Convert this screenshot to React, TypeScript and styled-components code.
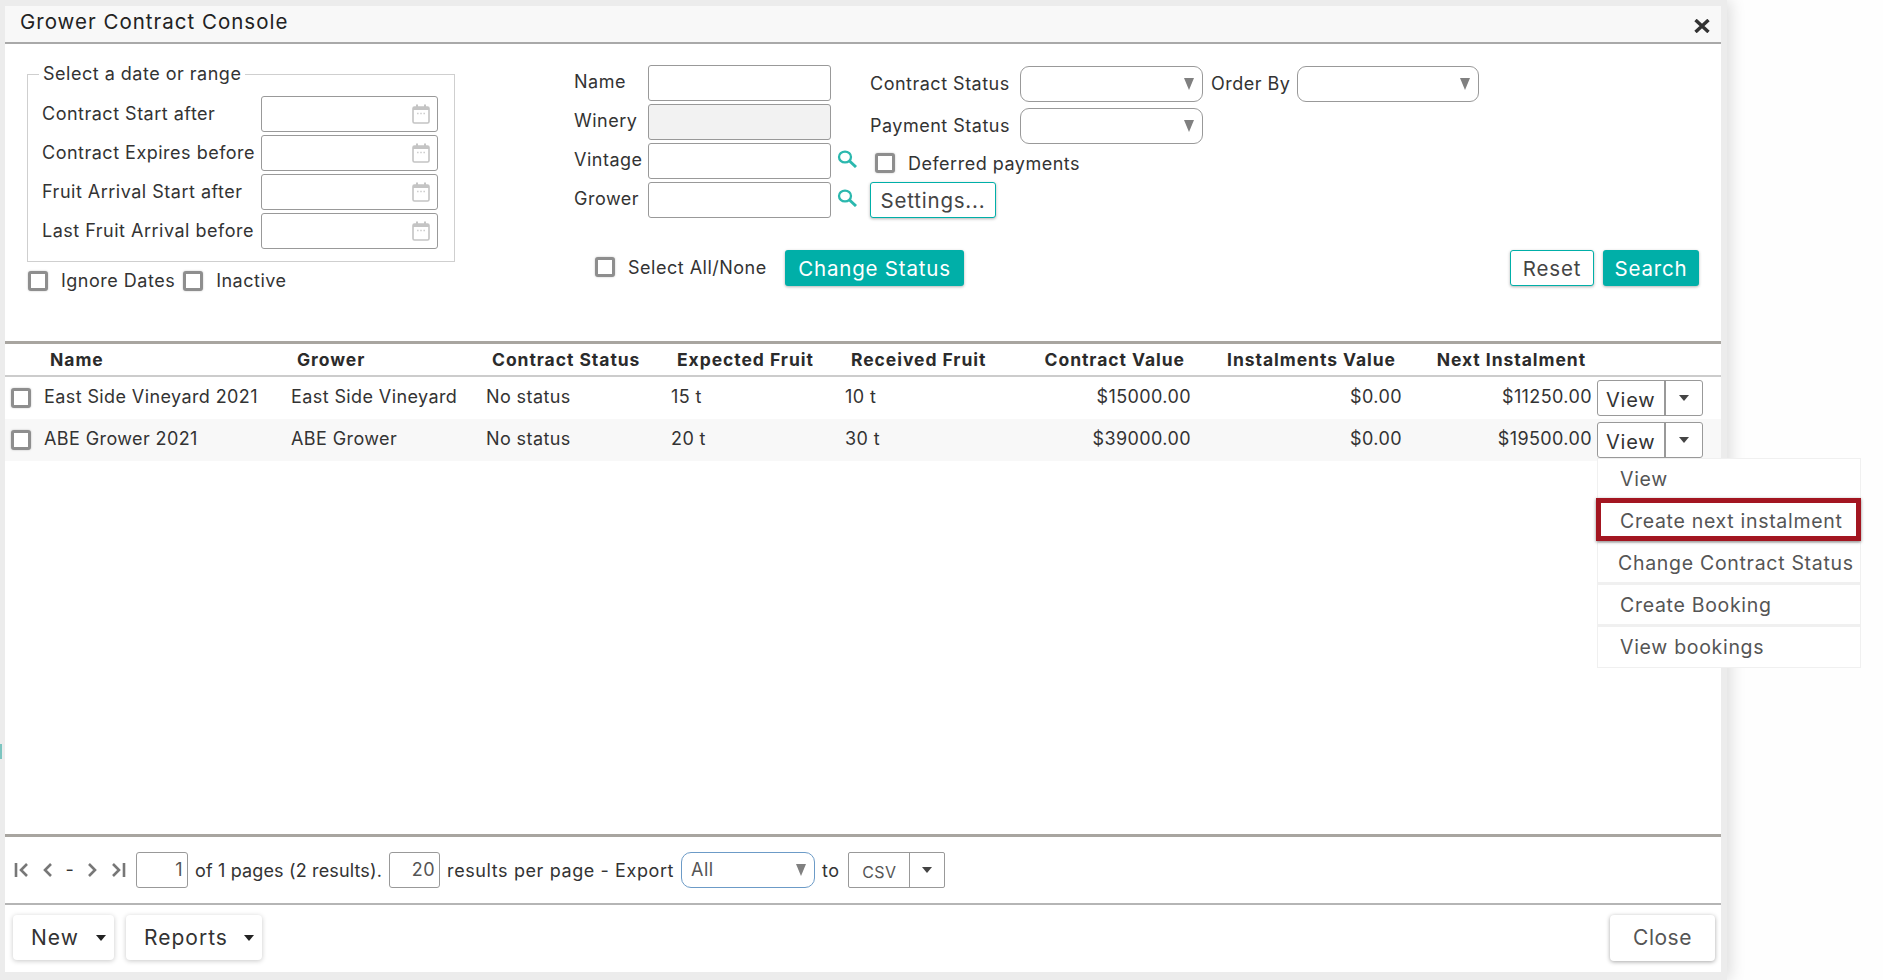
import styled, { createGlobalStyle } from 'styled-components'

const dateFields = ['Contract Start after', 'Contract Expires before', 'Fruit Arrival Start after', 'Last Fruit Arrival before']

const contracts = [
  { name: 'East Side Vineyard 2021', grower: 'East Side Vineyard', expected: '15 t', received: '10 t', value: '$15000.00', next: '$11250.00' },
  { name: 'ABE Grower 2021', grower: 'ABE Grower', expected: '20 t', received: '30 t', value: '$39000.00', next: '$19500.00' },
]

const menuItems = ['View', 'Create next instalment', 'Change Contract Status', 'Create Booking', 'View bookings']

const CalendarIcon = () => (
  <svg width="18" height="20" viewBox="0 0 18 20">
    <rect x="4" y="0.5" width="2" height="4" fill="#c4c4c4" />
    <rect x="12" y="0.5" width="2" height="4" fill="#c4c4c4" />
    <path d="M1 3h16v3H1z" fill="#c4c4c4" />
    <rect x="1" y="3" width="16" height="16" rx="1.5" fill="none" stroke="#c4c4c4" strokeWidth="1.6" />
    <path d="M5 9.5h1.6M8.2 9.5h1.6M11.4 9.5H13" stroke="#cfcfcf" strokeWidth="1.4" />
  </svg>
)

const SearchIcon = () => (
  <svg width="20" height="18" viewBox="0 0 20 18" fill="none" stroke="#2bb8ae">
    <ellipse cx="8" cy="7" rx="6" ry="5.4" strokeWidth="2.3" />
    <path d="M12.5 11l6.5 6" strokeWidth="3" />
  </svg>
)

const CloseIcon = () => (
  <svg width="16" height="14" viewBox="0 0 16 14" stroke="#333" strokeWidth="3.4">
    <path d="M1.5 1l13 12M14.5 1l-13 12" />
  </svg>
)

const PagerIcon = ({ d, width }: { d: string; width: number }) => (
  <svg width={width} height="16" viewBox={`0 0 ${width} 16`} fill="none" stroke="#777" strokeWidth="2.6">
    <path d={d} />
  </svg>
)

function App() {
  return (
    <>
      <GlobalStyle />
      <Page>
        <EdgeMark />
        <Dialog>
          <TitleBar>
            <Title>Grower Contract Console</Title>
            <CloseButton>
              <CloseIcon />
            </CloseButton>
          </TitleBar>

          <Filters>
            <DateColumn>
              <DateBox>
                <DateLegend>Select a date or range</DateLegend>
                <DateRows>
                  {dateFields.map((label) => (
                    <DateRow key={label}>
                      <DateLabel>{label}</DateLabel>
                      <DateInput>
                        <CalendarIcon />
                      </DateInput>
                    </DateRow>
                  ))}
                </DateRows>
              </DateBox>
              <CheckRow>
                <Checkbox />
                <CheckLabel>Ignore Dates</CheckLabel>
                <Checkbox />
                <CheckLabel>Inactive</CheckLabel>
              </CheckRow>
            </DateColumn>

            <MainColumn>
              <TopRows>
                <NameGroup>
                  <NameRow>
                    <NameLabel>Name</NameLabel>
                    <TextInput readOnly />
                  </NameRow>
                  <NameRow>
                    <NameLabel>Winery</NameLabel>
                    <TextInput readOnly disabled />
                  </NameRow>
                  <NameRow>
                    <NameLabel>Vintage</NameLabel>
                    <TextInput readOnly />
                    <SearchButton>
                      <SearchIcon />
                    </SearchButton>
                  </NameRow>
                  <NameRow>
                    <NameLabel>Grower</NameLabel>
                    <TextInput readOnly />
                    <SearchButton>
                      <SearchIcon />
                    </SearchButton>
                  </NameRow>
                </NameGroup>

                <StatusGroup>
                  <StatusRow>
                    <StatusLabel>Contract Status</StatusLabel>
                    <SelectBox $width={183}>
                      <SelectArrow />
                    </SelectBox>
                    <OrderLabel>Order By</OrderLabel>
                    <SelectBox $width={182}>
                      <SelectArrow />
                    </SelectBox>
                  </StatusRow>
                  <StatusRow>
                    <StatusLabel>Payment Status</StatusLabel>
                    <SelectBox $width={183}>
                      <SelectArrow />
                    </SelectBox>
                  </StatusRow>
                  <DeferredRow>
                    <Checkbox />
                    <CheckLabel>Deferred payments</CheckLabel>
                  </DeferredRow>
                  <OutlineButton $width={126}>Settings...</OutlineButton>
                </StatusGroup>
              </TopRows>

              <ActionRow>
                <SelectAll>
                  <Checkbox />
                  <CheckLabel>Select All/None</CheckLabel>
                </SelectAll>
                <PrimaryButton $width={179}>Change Status</PrimaryButton>
                <ActionSpacer />
                <SearchActions>
                  <OutlineButton $width={84}>Reset</OutlineButton>
                  <PrimaryButton $width={96}>Search</PrimaryButton>
                </SearchActions>
              </ActionRow>
            </MainColumn>
          </Filters>

          <Results>
            <HeaderRow>
              <span />
              <HeadCell>Name</HeadCell>
              <HeadCell>Grower</HeadCell>
              <HeadCell>Contract Status</HeadCell>
              <HeadCell>Expected Fruit</HeadCell>
              <HeadCell>Received Fruit</HeadCell>
              <HeadCell $right>Contract Value</HeadCell>
              <HeadCell $right>Instalments Value</HeadCell>
              <HeadCell $right>Next Instalment</HeadCell>
            </HeaderRow>

            {contracts.map((row, index) => (
              <DataRow key={row.name} $striped={index === 1}>
                <CheckCell>
                  <Checkbox />
                </CheckCell>
                <Cell>{row.name}</Cell>
                <Cell>{row.grower}</Cell>
                <Cell>No status</Cell>
                <Cell>{row.expected}</Cell>
                <Cell>{row.received}</Cell>
                <Cell $right>{row.value}</Cell>
                <Cell $right>$0.00</Cell>
                <Cell $right>{row.next}</Cell>
                <RowAction>
                  <SplitButton>
                    <SplitLabel>View</SplitLabel>
                    <SplitCaret>
                      <Caret />
                    </SplitCaret>
                  </SplitButton>
                  {index === 1 && (
                    <Menu>
                      {menuItems.map((item, i) => (
                        <MenuItem key={item} $shift={item === 'Change Contract Status'}>
                          {item}
                          {i === 1 && <Highlight />}
                        </MenuItem>
                      ))}
                    </Menu>
                  )}
                </RowAction>
              </DataRow>
            ))}
          </Results>

          <Pager>
            <PagerIcons>
              <PagerIcon width={15} d="M2 1v14M13 2L7 8l6 6" />
              <PagerIcon width={11} d="M9 2L3 8l6 6" />
              <Dash>-</Dash>
              <PagerIcon width={11} d="M2 2l6 6-6 6" />
              <PagerIcon width={15} d="M2 2l6 6-6 6M13 1v14" />
            </PagerIcons>
            <PageInput $width={52}>1</PageInput>
            <PagerText $spacing={0.15}>of 1 pages (2 results).</PagerText>
            <PageInput $width={51}>20</PageInput>
            <PagerText $spacing={0.6}>results per page - Export</PagerText>
            <ExportSelect>
              All
              <SelectArrow />
            </ExportSelect>
            <PagerText $spacing={0.4}>to</PagerText>
            <FormatCombo>
              <FormatValue>CSV</FormatValue>
              <FormatCaret>
                <Caret />
              </FormatCaret>
            </FormatCombo>
          </Pager>

          <Footer>
            <FooterButton $width={101}>
              New
              <FooterCaret />
            </FooterButton>
            <FooterButton $width={136}>
              Reports
              <FooterCaret />
            </FooterButton>
            <ActionSpacer />
            <CloseAction>Close</CloseAction>
          </Footer>
        </Dialog>
      </Page>
    </>
  )
}

export default App

const GlobalStyle = createGlobalStyle`
  html, body {
    margin: 0;
    height: 100%;
    background: #fefefe;
    overflow: hidden;
  }

  body {
    font-family: Inter, "Open Sans", sans-serif;
    font-size: 18px;
    letter-spacing: 0.5px;
    color: #333;
  }

  * {
    box-sizing: border-box;
  }
`

const Page = styled.div`
  position: relative;
  height: 980px;
  width: 1883px;
`

const EdgeMark = styled.span`
  position: absolute;
  z-index: 1;
  left: 0;
  top: 744px;
  width: 2px;
  height: 15px;
  background: #7cc5c0;
`

const Dialog = styled.div`
  width: 1727px;
  height: 980px;
  padding: 6px 6px 8px 5px;
  background: #ececec;
  box-shadow: 4px 0 14px rgba(0, 0, 0, 0.13);
  display: flex;
  flex-direction: column;

  & > * {
    background: #fff;
  }
`

const TitleBar = styled.div`
  height: 38px;
  flex: none;
  background: #f8f8f8;
  border-bottom: 2px solid #a9a9a9;
  display: flex;
  align-items: center;
  justify-content: space-between;
  padding: 0 11px 0 15px;
`

const Title = styled.h1`
  margin: 0 0 5px;
  font-size: 20.5px;
  font-weight: 400;
  letter-spacing: 1px;
  color: #222;
`

const CloseButton = styled.div`
  display: flex;
  margin-top: 3px;
`

const Filters = styled.div`
  height: 297px;
  flex: none;
  display: flex;
`

const DateColumn = styled.div`
  width: 428px;
  margin-left: 22px;
  padding-top: 19px;
  flex: none;
`

const DateBox = styled.fieldset`
  margin: 0;
  padding: 11px 16px 12px 14px;
  width: 428px;
  border: 1px solid #cfcfcf;
`

const DateLegend = styled.legend`
  margin-left: -3px;
  padding: 0 4px;
  line-height: 22px;
`

const DateRows = styled.div`
  display: flex;
  flex-direction: column;
  gap: 3px;
`

const DateRow = styled.div`
  display: flex;
  align-items: center;
  height: 36px;
`

const DateLabel = styled.label`
  width: 219px;
  flex: none;
  white-space: nowrap;
  margin-top: -2px;
`

const DateInput = styled.div`
  width: 177px;
  height: 36px;
  border: 1px solid #999;
  border-radius: 3px;
  display: flex;
  align-items: center;
  justify-content: flex-end;
  padding-right: 7px;
`

const CheckRow = styled.div`
  display: flex;
  align-items: center;
  margin: 8px 0 0 1px;
`

const Checkbox = styled.span`
  width: 20px;
  height: 20px;
  flex: none;
  display: inline-block;
  background: #fff;
  border: 3px solid #8e8e8e;
  border-radius: 3px;
  box-shadow: 0 0 2px rgba(0, 0, 0, 0.25);
`

const CheckLabel = styled.label`
  margin: 0 8px 0 13px;
  white-space: nowrap;
`

const MainColumn = styled.div`
  width: 1125px;
  margin-left: 119px;
  padding-top: 21px;
  flex: none;
`

const TopRows = styled.div`
  display: flex;
`

const NameGroup = styled.div`
  width: 296px;
  flex: none;
  display: flex;
  flex-direction: column;
  gap: 3px;
`

const NameRow = styled.div`
  display: flex;
  align-items: center;
  height: 36px;
`

const NameLabel = styled.label`
  width: 74px;
  flex: none;
  margin-top: -4px;
`

const TextInput = styled.input`
  width: 183px;
  height: 36px;
  flex: none;
  padding: 0 6px;
  border: 1px solid #999;
  border-radius: 3px;
  background: #fff;

  &:disabled {
    background: #f2f2f2;
  }
`

const SearchButton = styled.div`
  display: flex;
  margin: -5px 0 0 6px;
`

const StatusGroup = styled.div`
  padding-top: 1px;
  display: flex;
  flex-direction: column;
  align-items: flex-start;
`

const StatusRow = styled.div`
  display: flex;
  align-items: center;
  height: 36px;
  margin-bottom: 6px;
`

const StatusLabel = styled.label`
  width: 150px;
  flex: none;
  margin-top: -1px;
  white-space: nowrap;
`

const OrderLabel = styled.label`
  width: 94px;
  flex: none;
  padding-left: 8px;
  margin-top: -1px;
  white-space: nowrap;
`

const SelectBox = styled.div<{ $width: number }>`
  width: ${(p) => p.$width}px;
  height: 36px;
  position: relative;
  border: 1px solid #999;
  border-radius: 9px;
  background: #fff;
`

const SelectArrow = styled.span`
  position: absolute;
  right: 8px;
  top: 11px;
  width: 0;
  height: 0;
  border-left: 5.5px solid transparent;
  border-right: 5.5px solid transparent;
  border-top: 12px solid #808080;
`

const DeferredRow = styled.div`
  display: flex;
  align-items: center;
  height: 20px;
  margin: 3px 0 9px 5px;
`

const BaseButton = styled.button<{ $width: number }>`
  width: ${(p) => p.$width}px;
  height: 36px;
  padding: 0;
  border-radius: 3px;
  font: inherit;
  font-size: 20.5px;
  letter-spacing: 0.8px;
  box-shadow: 0 1px 3px rgba(0, 0, 0, 0.3);
`

const OutlineButton = styled(BaseButton)`
  background: #fff;
  border: 1px solid #00afa8;
  color: #444;
`

const PrimaryButton = styled(BaseButton)`
  background: #00afa8;
  border: none;
  color: #fff;
`

const ActionRow = styled.div`
  display: flex;
  align-items: center;
  height: 36px;
  margin-top: 32px;
`

const SearchActions = styled.div`
  display: flex;
  gap: 9px;
`

const SelectAll = styled.div`
  width: 211px;
  flex: none;
  display: flex;
  align-items: center;
  padding-left: 21px;
  margin-top: -2px;
`

const ActionSpacer = styled.div`
  flex: 1;
  align-self: stretch;
`

const Results = styled.div`
  flex: 1;
  border-top: 3px solid #a8a5a0;
`

const rowColumns = '39px 247px 195px 185px 174px 195px 151px 211px 190px 112px'

const HeaderRow = styled.div`
  display: grid;
  grid-template-columns: ${rowColumns};
  align-items: center;
  height: 33px;
  border-bottom: 2px solid #cccccc;
`

const HeadCell = styled.div<{ $right?: boolean }>`
  font-size: 17.5px;
  font-weight: 700;
  letter-spacing: 0.95px;
  white-space: nowrap;
  color: #2b2b2b;
  padding: ${(p) => (p.$right ? '0 6px 0 0' : '0 0 0 6px')};
  text-align: ${(p) => (p.$right ? 'right' : 'left')};
`

const DataRow = styled.div<{ $striped?: boolean }>`
  display: grid;
  grid-template-columns: ${rowColumns};
  align-items: center;
  height: 42px;
  background: ${(p) => (p.$striped ? '#f8f8f8' : '#fff')};
`

const Cell = styled.div<{ $right?: boolean }>`
  white-space: nowrap;
  margin-top: -4px;
  letter-spacing: 0.4px;
  text-align: ${(p) => (p.$right ? 'right' : 'left')};
`

const CheckCell = styled.div`
  display: flex;
  padding-left: 6px;
`

const RowAction = styled.div`
  position: relative;
  margin-left: 5px;
  width: 106px;
`

const SplitButton = styled.div`
  display: flex;
  height: 36px;
  background: #fff;
  border: 1px solid #999;
  border-radius: 3px;
`

const SplitLabel = styled.span`
  width: 68px;
  font-size: 20px;
  letter-spacing: 0.8px;
  line-height: 38px;
  padding-left: 8px;
  border-right: 2px solid #999;
`

const SplitCaret = styled.span`
  flex: 1;
  display: flex;
  align-items: center;
  justify-content: center;
`

const Caret = styled.span`
  width: 0;
  height: 0;
  border-left: 5.5px solid transparent;
  border-right: 5.5px solid transparent;
  border-top: 6px solid #444;
`

const Menu = styled.div`
  position: absolute;
  z-index: 2;
  left: 0;
  top: 36px;
  width: 264px;
  background: #fff;
  border: 1px solid #f0f0f0;
`

const MenuItem = styled.div<{ $shift?: boolean }>`
  position: relative;
  height: 42px;
  line-height: 40px;
  padding-left: ${(p) => (p.$shift ? '20px' : '22px')};
  font-size: 19.5px;
  letter-spacing: 0.7px;
  white-space: nowrap;
  color: #555;
  border-bottom: 3px solid #f0f0f0;

  &:last-child {
    height: 40px;
    border-bottom: none;
  }
`

const Highlight = styled.span`
  position: absolute;
  left: -2px;
  right: -1px;
  top: -3px;
  height: 43px;
  border: 5px solid #a31621;
  box-shadow: 0 1px 3px rgba(0, 0, 0, 0.45);
`

const Pager = styled.div`
  height: 71px;
  flex: none;
  display: flex;
  align-items: center;
  padding-left: 9px;
  border-top: 3px solid #a8a5a0;
  border-bottom: 2px solid #b5b5b5;
`

const PagerIcons = styled.div`
  width: 122px;
  flex: none;
  display: flex;
  align-items: center;
  justify-content: space-between;
  padding-right: 10px;
`

const Dash = styled.span`
  line-height: 16px;
`

const PageInput = styled.div<{ $width: number }>`
  width: ${(p) => p.$width}px;
  height: 36px;
  flex: none;
  border: 1px solid #999;
  border-radius: 3px;
  text-align: right;
  line-height: 34px;
  padding-right: 4px;
  color: #555;
`

const PagerText = styled.span<{ $spacing: number }>`
  margin: 0 7px;
  white-space: nowrap;
  letter-spacing: ${(p) => p.$spacing}px;
`

const ExportSelect = styled.div`
  width: 134px;
  height: 36px;
  flex: none;
  position: relative;
  border: 1px solid #6c9bc7;
  border-radius: 10px;
  line-height: 34px;
  padding-left: 9px;
  color: #555;
`

const FormatCombo = styled.div`
  width: 97px;
  height: 36px;
  flex: none;
  margin-left: 2px;
  display: flex;
  border: 1px solid #999;
  border-radius: 2px;
`

const FormatValue = styled.span`
  width: 61px;
  text-align: center;
  font-size: 16px;
  line-height: 38px;
  border-right: 1px solid #999;
  color: #555;
`

const FormatCaret = styled.span`
  flex: 1;
  display: flex;
  align-items: center;
  justify-content: center;
`

const Footer = styled.div`
  height: 67px;
  flex: none;
  display: flex;
  align-items: center;
  gap: 12px;
  padding: 0 6px 2px 8px;
`

const FooterButton = styled.button<{ $width: number }>`
  position: relative;
  width: ${(p) => p.$width}px;
  height: 45px;
  padding: 0 0 0 18px;
  text-align: left;
  border: none;
  border-radius: 4px;
  background: #fff;
  font: inherit;
  font-size: 21px;
  letter-spacing: 1px;
  color: #333;
  box-shadow: 0 1px 5px rgba(0, 0, 0, 0.22);
`

const FooterCaret = styled.span`
  position: absolute;
  right: 8px;
  top: 20px;
  width: 0;
  height: 0;
  border-left: 5.5px solid transparent;
  border-right: 5.5px solid transparent;
  border-top: 6px solid #222;
`

const CloseAction = styled.button`
  width: 105px;
  height: 46px;
  border: none;
  border-radius: 4px;
  background: #fff;
  font: inherit;
  font-size: 21px;
  letter-spacing: 0.5px;
  color: #555;
  box-shadow: 0 1px 4px rgba(0, 0, 0, 0.35);
`
